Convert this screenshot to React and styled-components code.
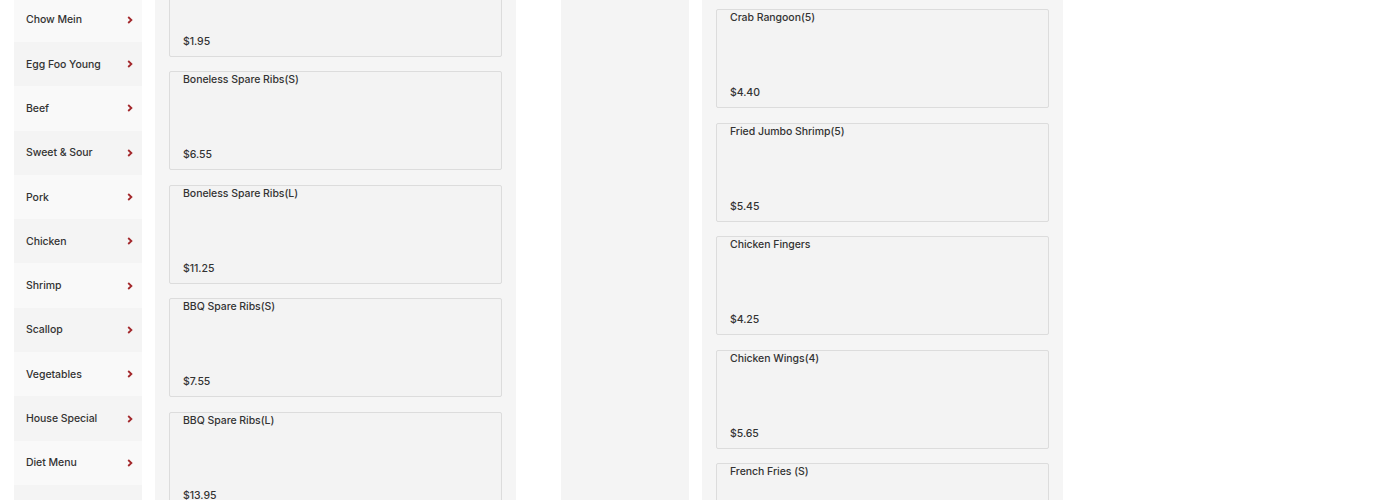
import React from "react"
import styled, { createGlobalStyle } from "styled-components"

const GlobalStyle = createGlobalStyle`
  html, body {
    margin: 0;
    padding: 0;
    background: #ffffff;
    overflow: hidden;
  }
  body {
    font-family: Inter, "Liberation Sans", Arial, sans-serif;
    color: #333;
  }
`

const Page = styled.div`
  display: flex;
  gap: 45px;
  height: 500px;
  padding-left: 14px;
  overflow: hidden;
`

const Section = styled.div`
  display: flex;
  gap: 13px;
  height: 100%;
`

const Sidebar = styled.ul`
  width: 128px;
  margin: ${(p) => p.offset || 0}px 0 0;
  padding: 0;
  list-style: none;
  background: ${(p) => (p.empty ? "#f4f4f4" : "transparent")};
  height: ${(p) => (p.empty ? "100%" : "auto")};
`

const CategoryRow = styled.li`
  display: flex;
  align-items: center;
  justify-content: space-between;
  height: 44.3px;
  padding: 0 9px 0 12px;
  box-sizing: border-box;
  background: ${(p) => (p.shade ? "#f4f4f4" : "#f9f9f9")};
  font-size: 10.5px;
  font-weight: 500;
  letter-spacing: -0.05px;
  color: #333;
`

const Chevron = styled.span`
  display: flex;
  color: #a3282c;
`

const ItemsPanel = styled.div`
  width: 361px;
  background: #f5f5f5;
  padding: 0 14px;
  box-sizing: border-box;
  overflow: hidden;
`

const ItemsList = styled.div`
  display: flex;
  flex-direction: column;
  gap: 14.5px;
  margin-top: ${(p) => p.offset}px;
`

const ItemCard = styled.div`
  height: 99px;
  box-sizing: border-box;
  border: 1px solid #dcdcdc;
  border-radius: 2px;
  background: #f3f3f3;
  display: flex;
  flex-direction: column;
  justify-content: ${(p) => (p.cut ? "flex-end" : "space-between")};
  padding: 0 13px 6px;
  font-size: 10.5px;
  font-weight: 500;
  letter-spacing: -0.05px;
  color: #333;
`

const ItemName = styled.div`
  line-height: 15px;
`

const ItemPrice = styled.div`
  line-height: 16px;
`

const categories = [
  "Chow Mein",
  "Egg Foo Young",
  "Beef",
  "Sweet & Sour",
  "Pork",
  "Chicken",
  "Shrimp",
  "Scallop",
  "Vegetables",
  "House Special",
  "Diet Menu",
  "Side Orders",
]

// first card is scrolled past its name
const leftItems = [
  [null, "$1.95"],
  ["Boneless Spare Ribs(S)", "$6.55"],
  ["Boneless Spare Ribs(L)", "$11.25"],
  ["BBQ Spare Ribs(S)", "$7.55"],
  ["BBQ Spare Ribs(L)", "$13.95"],
]

const rightItems = [
  ["Crab Rangoon(5)", "$4.40"],
  ["Fried Jumbo Shrimp(5)", "$5.45"],
  ["Chicken Fingers", "$4.25"],
  ["Chicken Wings(4)", "$5.65"],
  ["French Fries (S)", "$2.50"],
]

const ChevronIcon = () => (
  <svg width="6" height="8" viewBox="0 0 6 8">
    <path d="M1.2 1 L4.4 4 L1.2 7" fill="none" stroke="currentColor" strokeWidth="1.8" />
  </svg>
)

const Items = ({ items, offset }) => (
  <ItemsPanel>
    <ItemsList offset={offset}>
      {items.map(([name, price]) => (
        <ItemCard key={price} cut={!name}>
          {name && <ItemName>{name}</ItemName>}
          <ItemPrice>{price}</ItemPrice>
        </ItemCard>
      ))}
    </ItemsList>
  </ItemsPanel>
)

const App = () => (
  <>
    <GlobalStyle />
    <Page>
      <Section>
        <Sidebar offset={-2.3}>
          {categories.map((c, i) => (
            <CategoryRow key={c} shade={i % 2 === 1}>
              {c}
              <Chevron>
                <ChevronIcon />
              </Chevron>
            </CategoryRow>
          ))}
        </Sidebar>
        <Items items={leftItems} offset={-42.5} />
      </Section>
      <Section>
        <Sidebar empty />
        <Items items={rightItems} offset={9} />
      </Section>
    </Page>
  </>
)

export default App
